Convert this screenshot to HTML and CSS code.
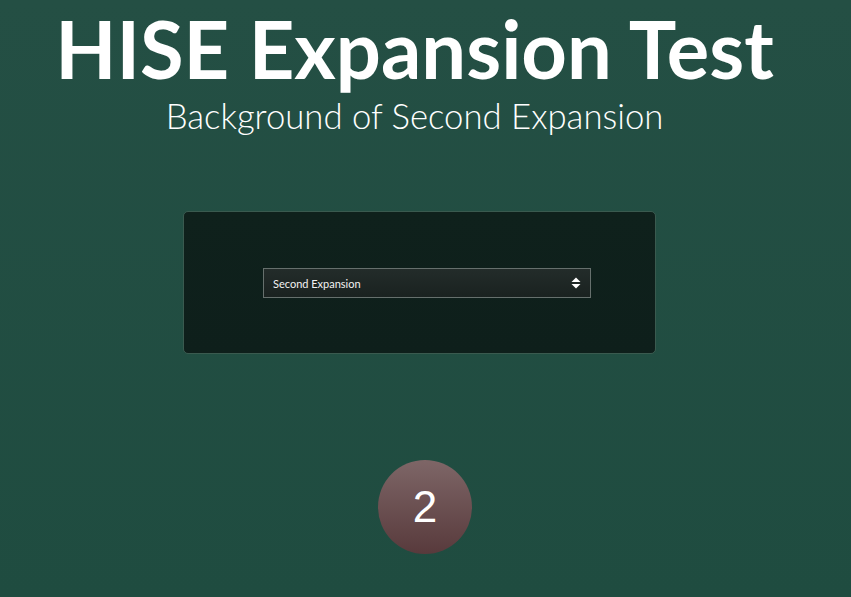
FILE: index.html
```html
<!DOCTYPE html>
<html>
<head>
<meta charset="utf-8">
<link rel="stylesheet" href="styles.css">
</head>
<body>
<main class="page">
  <h1 class="title">HISE Expansion Test</h1>
  <p class="subtitle">Background of Second Expansion</p>
  <section class="panel">
    <div class="select">
      <span class="select-label">Second Expansion</span>
      <svg class="select-arrows" width="10" height="12" viewBox="0 0 10 12">
        <path d="M5 0.5 L9.5 5 L0.5 5 Z" fill="#fff"/>
        <path d="M5 11.5 L9.5 7 L0.5 7 Z" fill="#fff"/>
      </svg>
    </div>
  </section>
  <div class="badge">2</div>
</main>
</body>
</html>
```
FILE: styles.css
```css
html, body {
  margin: 0;
  padding: 0;
}
body {
  width: 851px;
  height: 597px;
  overflow: hidden;
  background: linear-gradient(180deg, #244f44 0%, #1f4c40 100%);
  font-family: "Lato", "Liberation Sans", sans-serif;
}
.page {
  display: flex;
  flex-direction: column;
  align-items: flex-start;
  padding-top: 4px;
}
.title {
  margin: 0 0 0 34px;
  width: 761px;
  text-align: center;
  white-space: nowrap;
  font-size: 79.5px;
  line-height: 90px;
  font-weight: 700;
  color: #ffffff;
}
.subtitle {
  margin: 2px 0 0 134px;
  width: 561px;
  text-align: center;
  white-space: nowrap;
  font-size: 34.7px;
  line-height: 40px;
  font-weight: 300;
  color: #ffffff;
}
.panel {
  margin: 75px 0 0 183px;
  width: 473px;
  height: 143px;
  box-sizing: border-box;
  border: 1px solid #3a5a4f;
  border-radius: 5px;
  background: linear-gradient(180deg, #0f211c 0%, #0e1f1b 100%);
  display: flex;
  align-items: center;
  padding-left: 79px;
}
.select {
  width: 328px;
  height: 30px;
  box-sizing: border-box;
  border: 1px solid #66706d;
  background: linear-gradient(180deg, #232c2a 0%, #1a2220 100%);
  display: flex;
  align-items: center;
  justify-content: space-between;
  padding: 2px 9px 0 9px;
}
.select-label {
  font-family: "Lato", sans-serif;
  font-size: 11px;
  color: #f2f2f2;
}
.select-arrows {
  display: block;
  margin-top: -2px;
}
.badge {
  margin: 106px 0 0 378px;
  width: 94px;
  height: 94px;
  border-radius: 50%;
  background: linear-gradient(180deg, #7e6667 0%, #583a3c 100%);
  color: #ffffff;
  font-family: "Liberation Sans", sans-serif;
  font-size: 44px;
  display: flex;
  align-items: center;
  justify-content: center;
}
```
